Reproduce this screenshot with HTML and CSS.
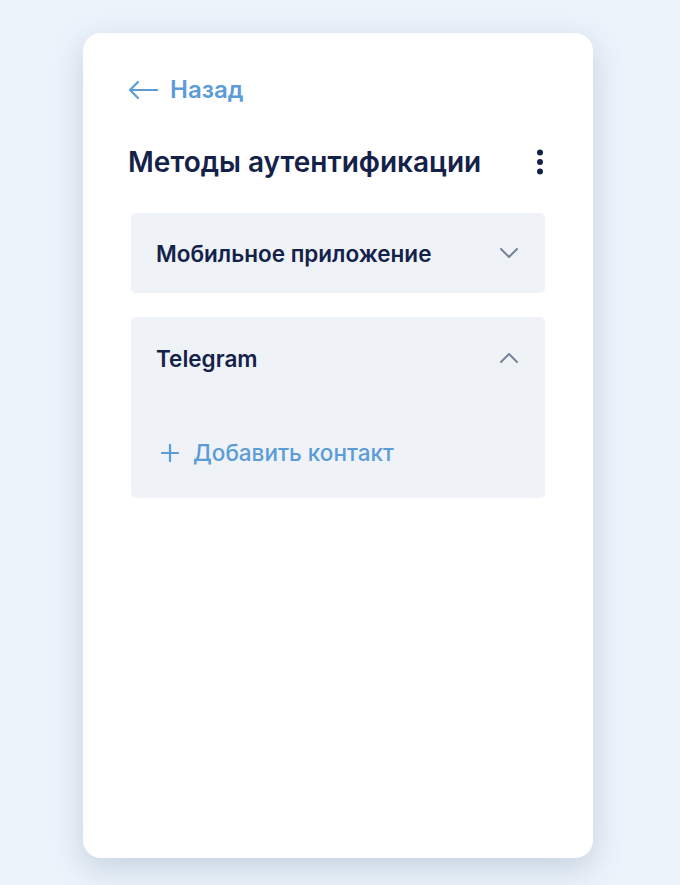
FILE: index.html
```html
<html>
  <head>
    <link rel="stylesheet" href="styles.css">
    <title>Методы аутентификации</title>
  </head>
  <body>
    <div class="card">
      <a class="back" href="#">
        <svg width="30" height="20" viewBox="0 0 30 20"><path d="M29 10H2M10 2L2 10l8 8" fill="none" stroke="currentColor" stroke-width="2.2" stroke-linecap="round" stroke-linejoin="round"/></svg>
        <span>Назад</span>
      </a>

      <div class="head">
        <h1>Методы аутентификации</h1>
        <button class="more">
          <svg width="8" height="26" viewBox="0 0 8 26"><circle cx="4" cy="3.5" r="3"/><circle cx="4" cy="13" r="3"/><circle cx="4" cy="22.5" r="3"/></svg>
        </button>
      </div>

      <div class="item">
        <div class="item-top">
          <span>Мобильное приложение</span>
          <svg width="20" height="12" viewBox="0 0 20 12"><path d="M2 2l8 8 8-8" fill="none" stroke="currentColor" stroke-width="2" stroke-linecap="round" stroke-linejoin="round"/></svg>
        </div>
      </div>

      <div class="item open">
        <div class="item-top">
          <span>Telegram</span>
          <svg width="20" height="12" viewBox="0 0 20 12"><path d="M2 10l8-8 8 8" fill="none" stroke="currentColor" stroke-width="2" stroke-linecap="round" stroke-linejoin="round"/></svg>
        </div>
        <a class="add" href="#">
          <svg width="18" height="18" viewBox="0 0 18 18"><path d="M9 1v16M1 9h16" fill="none" stroke="currentColor" stroke-width="2.2" stroke-linecap="round"/></svg>
          <span>Добавить контакт</span>
        </a>
      </div>
    </div>
  </body>
</html>
```

FILE: styles.css
```css
body {
  margin: 0;
  background: #ebf3fb;
  font-family: Inter, "Noto Sans", sans-serif;
  padding: 33px 0 0 83px;
}

.card {
  width: 510px;
  height: 825px;
  box-sizing: border-box;
  background: #fff;
  border-radius: 18px;
  box-shadow: 0 10px 30px rgba(90, 110, 140, 0.25);
  padding: 42px 45px;
}

.back {
  display: inline-flex;
  align-items: center;
  gap: 12px;
  color: #5b9bd8;
  text-decoration: none;
  font-size: 24px;
  font-weight: 600;
}

.head {
  display: flex;
  justify-content: space-between;
  align-items: center;
  margin-top: 41px;
  margin-bottom: 34px;
}

h1 {
  margin: 0;
  font-size: 28px;
  font-weight: 600;
  color: #14224a;
}

.more {
  border: none;
  background: none;
  padding: 0;
  margin-right: 4px;
  color: #14224a;
  fill: #14224a;
  display: flex;
}

.item {
  margin: 0 3px 24px;
  background: #eff3f7;
  border-radius: 5px;
}

.item-top {
  height: 80px;
  display: flex;
  justify-content: space-between;
  align-items: center;
  padding: 0 26px 0 25px;
  font-size: 22.5px;
  font-weight: 600;
  color: #14224a;
}

.item-top svg {
  color: #75839a;
}

.open .item-top {
  height: 82px;
}

.add {
  display: flex;
  align-items: center;
  gap: 14px;
  padding: 40px 30px 32px;
  color: #5b9bd8;
  text-decoration: none;
  font-size: 22.5px;
  font-weight: 500;
}
```
